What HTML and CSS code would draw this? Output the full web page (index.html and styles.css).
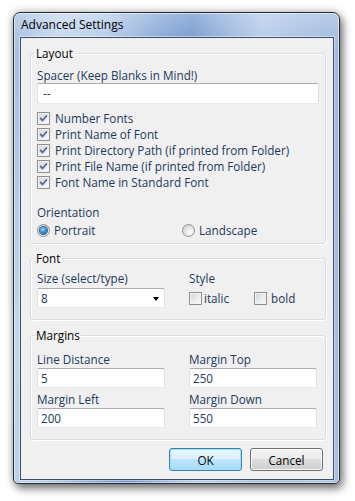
FILE: index.html
```html
<!DOCTYPE html>
<html>
<head>
<meta charset="utf-8">
<link rel="stylesheet" href="styles.css">
</head>
<body>
<div class="window">
  <div class="titlebar">Advanced Settings</div>
  <div class="client">
    <fieldset class="group g-layout">
      <legend>Layout</legend>
      <div class="label">Spacer (Keep Blanks in Mind!)</div>
      <div class="textbox spacer">--</div>
      <div class="checks">
        <div class="check"><span class="cb on"><svg viewBox="0 0 13 13"><path d="M3 6.2 L5.4 9 L10 3.3"/></svg></span>Number Fonts</div>
        <div class="check"><span class="cb on"><svg viewBox="0 0 13 13"><path d="M3 6.2 L5.4 9 L10 3.3"/></svg></span>Print Name of Font</div>
        <div class="check"><span class="cb on"><svg viewBox="0 0 13 13"><path d="M3 6.2 L5.4 9 L10 3.3"/></svg></span>Print Directory Path (if printed from Folder)</div>
        <div class="check"><span class="cb on"><svg viewBox="0 0 13 13"><path d="M3 6.2 L5.4 9 L10 3.3"/></svg></span>Print File Name (if printed from Folder)</div>
        <div class="check"><span class="cb on"><svg viewBox="0 0 13 13"><path d="M3 6.2 L5.4 9 L10 3.3"/></svg></span>Font Name in Standard Font</div>
      </div>
      <div class="label orient">Orientation</div>
      <div class="radios">
        <div class="radio r-portrait"><span class="rb sel"><span class="dot"></span></span>Portrait</div>
        <div class="radio"><span class="rb"></span>Landscape</div>
      </div>
    </fieldset>

    <fieldset class="group g-font">
      <legend>Font</legend>
      <div class="cols">
        <div class="col">
          <div class="label">Size (select/type)</div>
          <div class="select"><span>8</span><span class="arrow"></span></div>
        </div>
        <div class="col">
          <div class="label">Style</div>
          <div class="styles">
            <div class="check s-italic"><span class="cb"></span>italic</div>
            <div class="check s-bold"><span class="cb"></span>bold</div>
          </div>
        </div>
      </div>
    </fieldset>

    <fieldset class="group g-margins">
      <legend>Margins</legend>
      <div class="cols mrows">
        <div class="col">
          <div class="label">Line Distance</div>
          <div class="textbox">5</div>
        </div>
        <div class="col">
          <div class="label">Margin Top</div>
          <div class="textbox">250</div>
        </div>
        <div class="col">
          <div class="label">Margin Left</div>
          <div class="textbox">200</div>
        </div>
        <div class="col">
          <div class="label">Margin Down</div>
          <div class="textbox">550</div>
        </div>
      </div>
    </fieldset>

    <div class="buttons">
      <button class="btn default">OK</button>
      <button class="btn">Cancel</button>
    </div>
  </div>
</div>
</body>
</html>
```

FILE: styles.css
```css
* { box-sizing: border-box; }
html, body { margin: 0; padding: 0; background: #fff; }
body {
  width: 355px; height: 501px; overflow: hidden;
  font-family: "Open Sans", "Noto Sans", sans-serif;
  font-size: 11.7px;
}
.window {
  margin: 12px 0 0 13px;
  width: 327px; height: 472px;
  border: 1px solid #262b33;
  border-radius: 7px 7px 5px 5px;
  padding: 0 5px 3px 6px;
  display: flex; flex-direction: column;
  background:
    linear-gradient(to bottom, rgba(255,255,255,0.3), rgba(255,255,255,0) 40px),
    linear-gradient(98deg, #9fbae0 0%, #c2d4ed 12%, #b3c9e8 24%, #7fa2d3 38%, #6c93cc 46%, #95b3dd 56%, #b2c8e8 64%, #9db7de 80%, #a5bee1 100%);
  box-shadow: inset 0 0 0 1px rgba(255,255,255,0.55), 0 0 8px rgba(0,0,0,0.3), 3px 5px 8px rgba(0,0,0,0.45);
}
.titlebar {
  height: 24px; line-height: 24px;
  padding-left: 1px;
  color: #000;
  font-size: 12px;
}
.client {
  flex: 1;
  background: #f0f0f0;
  border: 1px solid #3d4f66;
  box-shadow: 0 0 0 1px rgba(255,255,255,0.45);
  padding: 0 7px 0 9px;
  display: flex; flex-direction: column;
  color: #1e395b;
}
.group {
  margin: 0;
  border: 1px solid #d5dfe5;
  border-radius: 3px;
  box-shadow: inset 1px 1px 0 #fff, 1px 1px 0 #fff;
  padding: 0 6px 0 6px;
  min-width: 0;
}
.group legend {
  padding: 0 1px;
  margin-left: -2px;
  line-height: 14px;
  color: #000;
}
.label { line-height: 14px; white-space: nowrap; }
.g-layout { margin-top: 8px; padding-top: 8px; padding-bottom: 5px; }
.g-font { margin-top: 7px; padding-top: 6px; padding-bottom: 11px; }
.g-margins { margin-top: 8px; padding-top: 10px; padding-bottom: 11px; }

.textbox {
  height: 20px;
  margin-top: 2px;
  background: #fff;
  border: 1px solid #dde3ea;
  border-top-color: #abadb3;
  border-bottom-color: #e3e9ef;
  border-radius: 2px;
  padding-left: 3px;
  line-height: 18px;
  color: #1e395b;
}
.textbox.spacer { height: 21px; margin-top: 1px; line-height: 19px; padding-left: 5px; }

.checks { margin-top: 6px; display: flex; flex-direction: column; }
.check { height: 16px; display: flex; align-items: center; white-space: nowrap; }
.cb {
  width: 13px; height: 13px; flex: none;
  border: 1px solid #8e8f8f;
  background: linear-gradient(135deg, #d2d4d8 0%, #eceef0 60%, #fafafa 100%);
  box-shadow: inset 0 0 0 1px #f3f3f3;
  margin-right: 5px;
  display: flex; align-items: center; justify-content: center;
}
.cb svg { width: 11px; height: 11px; }
.cb svg path { fill: none; stroke: #4a5f97; stroke-width: 1.9; stroke-linecap: round; stroke-linejoin: round; }

.orient { margin-top: 15px; }
.radios { margin-top: 3px; display: flex; }
.radio { height: 16px; display: flex; align-items: center; white-space: nowrap; }
.r-portrait { width: 145px; }
.rb {
  width: 13px; height: 13px; flex: none;
  border-radius: 50%;
  border: 1px solid #8e8f8f;
  background: radial-gradient(circle at 65% 65%, #fdfdfd 0%, #e3e3e3 50%, #cfcfcf 100%);
  margin-right: 4px;
  display: flex; align-items: center; justify-content: center;
}
.rb .dot {
  width: 7px; height: 7px; border-radius: 50%;
  background: radial-gradient(circle at 40% 35%, #a7e0fb 0%, #3d9be0 40%, #13457a 100%);
  box-shadow: 0 0 0 1px #2c5f93;
}

.cols {
  display: grid;
  grid-template-columns: 128px 128px;
  column-gap: 24px;
}
.select {
  margin-top: 3px;
  height: 20px;
  background: #fff;
  border: 1px solid #dde3ea;
  border-top-color: #abadb3;
  border-bottom-color: #e3e9ef;
  border-radius: 2px;
  padding: 0 5px 0 3px;
  display: flex; align-items: center; justify-content: space-between;
  color: #1e395b;
}
.arrow {
  width: 0; height: 0;
  border-left: 3.5px solid transparent;
  border-right: 3.5px solid transparent;
  border-top: 4px solid #000;
  margin-top: 1px;
}
.styles { margin-top: 5px; display: flex; }
.s-italic { width: 65px; }
.s-italic .cb { margin-right: 2px; }
.s-bold .cb { margin-right: 4px; }

.mrows { row-gap: 4px; }

.buttons {
  margin-top: 8px;
  display: flex; justify-content: flex-end;
  gap: 8px;
  padding-right: 3px;
}
.btn {
  width: 73px; height: 23px;
  font-family: inherit; font-size: 11.7px;
  color: #000;
  border: 1px solid #707070;
  border-radius: 3px;
  background: linear-gradient(to bottom, #f2f2f2 0%, #ebebeb 49%, #dddddd 50%, #cfcfcf 100%);
  box-shadow: inset 0 0 0 1px rgba(255,255,255,0.8);
  padding: 0;
}
.btn.default {
  border-color: #3c7fb1;
  background: linear-gradient(to bottom, #eaf6fd 0%, #d9f0fc 49%, #bee6fd 50%, #a7d9f5 100%);
  box-shadow: inset 0 0 0 1px #9fe0fb;
}
```
